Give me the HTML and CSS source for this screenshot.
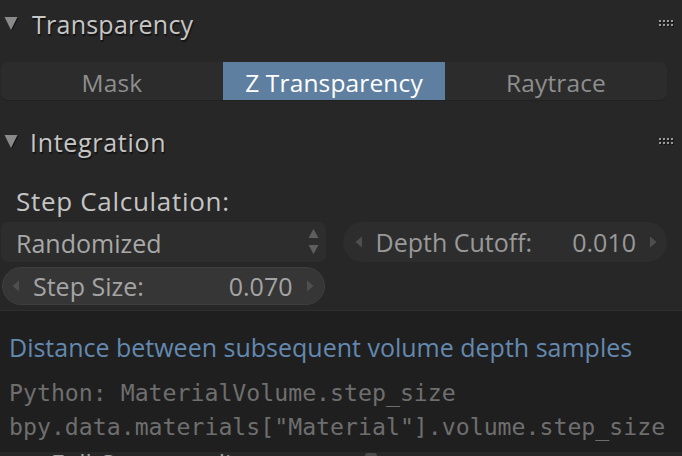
FILE: index.html
```html
<!DOCTYPE html>
<html>
<head>
<meta charset="utf-8">
<link rel="stylesheet" href="styles.css">
</head>
<body>
<div class="panel">
  <div class="hdr">
    <svg class="tri" width="14" height="15" viewBox="0 0 14 15"><polygon points="0.5,1 13.5,1 7,14" /></svg>
    <span class="title t1">Transparency</span>
    <svg class="grip" width="16" height="7" viewBox="0 0 16 7">
      <g class="gs"><rect x="1" y="1" width="2" height="2"/><rect x="5" y="1" width="2" height="2"/><rect x="9" y="1" width="2" height="2"/><rect x="13" y="1" width="2" height="2"/><rect x="1" y="5" width="2" height="2"/><rect x="5" y="5" width="2" height="2"/><rect x="9" y="5" width="2" height="2"/><rect x="13" y="5" width="2" height="2"/></g>
      <g class="gl"><rect x="0" y="0" width="2" height="2"/><rect x="4" y="0" width="2" height="2"/><rect x="8" y="0" width="2" height="2"/><rect x="12" y="0" width="2" height="2"/><rect x="0" y="4" width="2" height="2"/><rect x="4" y="4" width="2" height="2"/><rect x="8" y="4" width="2" height="2"/><rect x="12" y="4" width="2" height="2"/></g>
    </svg>
  </div>
  <div class="seg">
    <div class="segbtn">Mask</div>
    <div class="segbtn on">Z Transparency</div>
    <div class="segbtn">Raytrace</div>
  </div>
  <div class="hdr hdr2">
    <svg class="tri" width="14" height="15" viewBox="0 0 14 15"><polygon points="0.5,1 13.5,1 7,14" /></svg>
    <span class="title t2">Integration</span>
    <svg class="grip" width="16" height="7" viewBox="0 0 16 7">
      <g class="gs"><rect x="1" y="1" width="2" height="2"/><rect x="5" y="1" width="2" height="2"/><rect x="9" y="1" width="2" height="2"/><rect x="13" y="1" width="2" height="2"/><rect x="1" y="5" width="2" height="2"/><rect x="5" y="5" width="2" height="2"/><rect x="9" y="5" width="2" height="2"/><rect x="13" y="5" width="2" height="2"/></g>
      <g class="gl"><rect x="0" y="0" width="2" height="2"/><rect x="4" y="0" width="2" height="2"/><rect x="8" y="0" width="2" height="2"/><rect x="12" y="0" width="2" height="2"/><rect x="0" y="4" width="2" height="2"/><rect x="4" y="4" width="2" height="2"/><rect x="8" y="4" width="2" height="2"/><rect x="12" y="4" width="2" height="2"/></g>
    </svg>
  </div>
  <div class="label">Step Calculation:</div>
  <div class="cols">
    <div class="col">
      <div class="dropdown">
        <span>Randomized</span>
        <svg class="updown" width="11" height="26" viewBox="0 0 11 26"><polygon points="5.5,0 10.5,9 0.5,9"/><polygon points="0.5,16 10.5,16 5.5,25"/></svg>
      </div>
      <div class="num hover">
        <svg class="arr" width="8" height="12" viewBox="0 0 8 12"><polygon points="7,0.5 7,11.5 0.5,6"/></svg>
        <span class="nlabel">Step Size:</span>
        <span class="nval">0.070</span>
        <svg class="arr" width="8" height="12" viewBox="0 0 8 12"><polygon points="1,0.5 1,11.5 7.5,6"/></svg>
      </div>
    </div>
    <div class="col">
      <div class="num">
        <svg class="arr" width="8" height="12" viewBox="0 0 8 12"><polygon points="7,0.5 7,11.5 0.5,6"/></svg>
        <span class="nlabel">Depth Cutoff:</span>
        <span class="nval">0.010</span>
        <svg class="arr" width="8" height="12" viewBox="0 0 8 12"><polygon points="1,0.5 1,11.5 7.5,6"/></svg>
      </div>
    </div>
  </div>
  <div class="more">
    <div class="mrow"></div>
    <div class="mrow"></div>
    <div class="mrow"></div>
    <div class="mrow">
      <div class="mcell"><span class="mtext">Full Oversampling</span></div>
      <div class="mcell mcell-r"><span class="mark"></span></div>
    </div>
  </div>
</div>
<div class="tooltip">
  <div class="tt-title">Distance between subsequent volume depth samples</div>
  <div class="tt-code tt-first">Python: MaterialVolume.step_size</div>
  <div class="tt-code">bpy.data.materials["Material"].volume.step_size</div>
</div>
</body>
</html>
```
FILE: styles.css
```css
html, body {
  margin: 0;
  padding: 0;
  background: #272727;
  width: 682px;
  height: 456px;
  overflow: hidden;
  font-family: "Open Sans", "DejaVu Sans", sans-serif;
}
.panel {
  position: relative;
  padding: 0 15px 0 1px;
}
.hdr {
  height: 48px;
  display: flex;
  align-items: center;
  padding-left: 3px;
  margin-right: -10px;
}
.hdr2 {
  margin-top: 18px;
}
.tri {
  fill: #8a8a8a;
  margin-right: 14px;
  margin-top: -2px;
  filter: drop-shadow(1px 1px 0 rgba(0,0,0,0.5));
}
.title {
  font-size: 25px;
  color: #c6c6c6;
  line-height: 48px;
  text-shadow: 1px 2px 1px rgba(0,0,0,0.55);
  flex: 1;
}
.t1 {
  letter-spacing: 0.25px;
}
.t2 {
  letter-spacing: 0.7px;
  margin-left: -2px;
}
.grip {
  margin-right: 2px;
  margin-top: -1px;
}
.grip .gl { fill: #9a9a9a; }
.grip .gs { fill: #141414; }
.seg {
  margin-top: 14px;
  height: 38px;
  display: flex;
  background: #2c2c2c;
  border-radius: 7px;
  box-shadow: 0 1px 0 rgba(0,0,0,0.15);
  overflow: hidden;
}
.segbtn {
  flex: 1;
  text-align: center;
  font-size: 24.5px;
  color: #8e8e8e;
  line-height: 35px;
  padding-top: 3px;
  letter-spacing: 0.15px;
}
.segbtn.on {
  background: #5f7fa0;
  color: #ffffff;
}
.label {
  margin-top: 14px;
  height: 42px;
  line-height: 42px;
  padding-left: 15px;
  font-size: 26px;
  letter-spacing: 0.7px;
  color: #c4c4c4;
}
.cols {
  display: flex;
  gap: 17px;
}
.col {
  flex: 1;
  display: flex;
  flex-direction: column;
  gap: 5px;
}
.dropdown {
  height: 40px;
  background: #2d2d2d;
  border-radius: 7px;
  display: flex;
  align-items: center;
  padding: 0 6px 0 15px;
  font-size: 25px;
  color: #a8a8a8;
}
.dropdown span {
  flex: 1;
  line-height: 40px;
  padding-top: 1px;
}
.updown {
  fill: #5e5e5e;
  margin-right: 1px;
}
.num {
  height: 40px;
  border-radius: 20px;
  background: #2d2d2d;
  display: flex;
  align-items: center;
  padding: 0 10px 0 12px;
  font-size: 25px;
  color: #999999;
}
.num.hover {
  height: 36px;
  margin: 0 1px;
  background: #363636;
  border: 1px solid #3e3e3e;
  color: #a4a4a4;
  padding-left: 9px;
}
.arr {
  fill: #4f4f4f;
}
.nlabel {
  margin-left: 13px;
  flex: 1;
}
.nval {
  margin-right: 13px;
}
.more {
  margin-top: 7px;
}
.mrow {
  height: 43px;
  display: flex;
  gap: 17px;
}
.mcell {
  flex: 1;
  display: flex;
  align-items: center;
  padding-left: 50px;
  font-size: 25px;
  color: #a0a0a0;
  line-height: 40px;
}
.mcell-r {
  padding-left: 0;
  margin-left: -6px;
}
.mark {
  width: 12px;
  height: 20px;
  border-radius: 3px;
  background: #4a4a4a;
}
.tooltip {
  position: absolute;
  left: 0;
  right: 0;
  top: 310px;
  height: 142px;
  box-sizing: border-box;
  background: #1f1f1f;
  border-top: 1px solid #2f2f2f;
  padding: 16px 9px 0 9px;
}
.tt-title {
  font-size: 25px;
  line-height: 40px;
  color: #6389b0;
  white-space: nowrap;
}
.tt-code {
  font-family: "DejaVu Sans Mono", monospace;
  font-size: 23.2px;
  line-height: 33.5px;
  color: #6e6e6e;
  white-space: nowrap;
}
.tt-first {
  margin-top: 9px;
}
```
